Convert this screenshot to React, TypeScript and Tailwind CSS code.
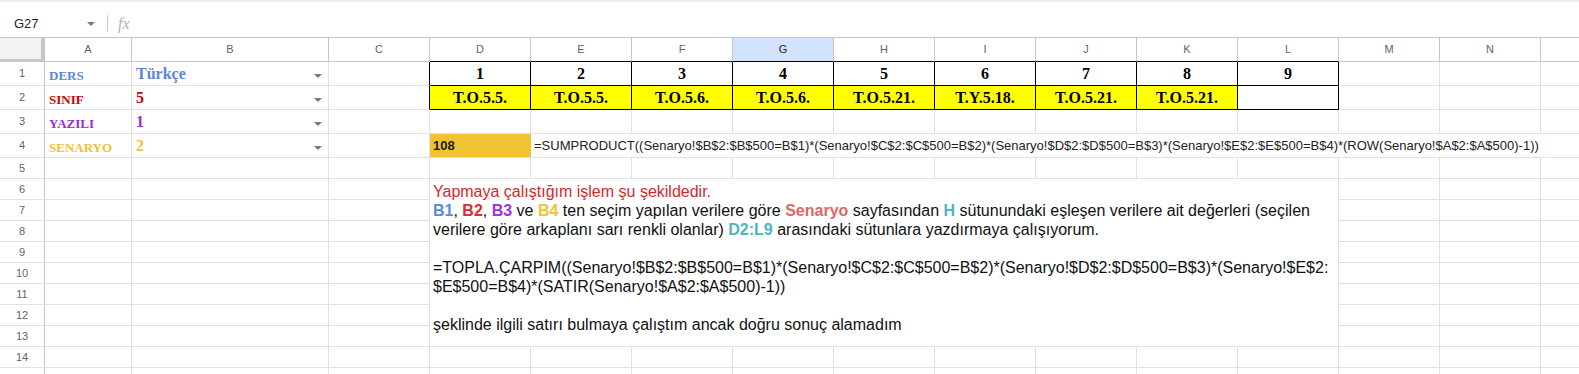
import React from 'react'

const cols = ['A', 'B', 'C', 'D', 'E', 'F', 'G', 'H', 'I', 'J', 'K', 'L', 'M', 'N', 'O']

const choices = [
  { label: 'DERS', value: 'Türkçe', color: 'text-[#5b87d2]' },
  { label: 'SINIF', value: '5', color: 'text-[#cc0000]' },
  { label: 'YAZILI', value: '1', color: 'text-[#9a2bd8]' },
  { label: 'SENARYO', value: '2', color: 'text-[#f1c232]' },
]

const codes = ['T.O.5.5.', 'T.O.5.5.', 'T.O.5.6.', 'T.O.5.6.', 'T.O.5.21.', 'T.Y.5.18.', 'T.O.5.21.', 'T.O.5.21.']

const formula =
  '=SUMPRODUCT((Senaryo!$B$2:$B$500=B$1)*(Senaryo!$C$2:$C$500=B$2)*(Senaryo!$D$2:$D$500=B$3)*(Senaryo!$E$2:$E$500=B$4)*(ROW(Senaryo!$A$2:$A$500)-1))'

function Arrow() {
  return (
    <svg width="8" height="4" viewBox="0 0 8 4" className="shrink-0">
      <path d="M0 0h8L4 4z" fill="#7b7b7b" />
    </svg>
  )
}

function RowHead({ n }: { n?: number }) {
  return (
    <div className="flex items-center justify-center border-r border-b border-r-[#c4c7c5] border-b-[#e1e1e1] text-[11px] text-[#5f6368]">
      {n}
    </div>
  )
}

function Blank({ right }: { right?: boolean }) {
  return <div className={`border-r border-b border-b-[#e1e1e1] ${right ? 'border-r-black' : 'border-r-[#e1e1e1]'}`} />
}

export default function App() {
  const rows: React.ReactNode[] = []

  // header row
  rows.push(
    <div key="corner" className="bg-[#f3f3f3] border-r-4 border-b-[3px] border-[#c4c7c5]" />
  )
  cols.forEach((c) =>
    rows.push(
      <div
        key={'h' + c}
        className={`flex items-center justify-center border-r border-b border-[#c4c7c5] text-[11px] ${
          c === 'G' ? 'bg-[#d3e3fd] text-[#1f1f1f]' : 'text-[#5f6368]'
        } ${'DEFGHIJKL'.includes(c) ? 'border-b-black' : ''}`}
      >
        {/* O's label sits past the right edge of the window */}
        {c === 'O' ? null : c}
      </div>
    )
  )

  // rows 1-4
  choices.forEach((ch, i) => {
    const r = i + 1
    rows.push(<RowHead key={'r' + r} n={r} />)
    rows.push(
      <div key={'a' + r} className="flex items-end pl-[4px] pb-[3px] border-r border-b border-[#e1e1e1]">
        <span className={`font-['Liberation_Serif',serif] font-bold text-[13px] leading-none ${ch.color}`}>{ch.label}</span>
      </div>
    )
    rows.push(
      <div key={'b' + r} className="flex items-end justify-between pl-[4px] pr-[6px] pb-[3px] border-r border-b border-[#e1e1e1]">
        <span className={`font-['Liberation_Serif',serif] font-bold text-[16px] leading-none ${ch.color}`}>{ch.value}</span>
        <div className="mb-[4px]">
          <Arrow />
        </div>
      </div>
    )
    rows.push(<Blank key={'c' + r} right={r <= 2} />)

    if (r === 1) {
      for (let k = 1; k <= 9; k++) {
        rows.push(
          <div
            key={'n' + k}
            className="flex items-center justify-center border-r border-b border-black font-['Liberation_Serif',serif] font-bold text-[16px] text-black"
          >
            {k}
          </div>
        )
      }
      ;['M', 'N', 'O'].forEach((c) => rows.push(<Blank key={'1' + c} />))
    } else if (r === 2) {
      codes.forEach((code, k) =>
        rows.push(
          <div
            key={'t' + k}
            className="flex items-center justify-center bg-[#ffff00] border-r border-b border-black font-['Liberation_Serif',serif] font-bold text-[16px] text-black"
          >
            {code}
          </div>
        )
      )
      rows.push(<div key="l2" className="border-r border-b border-black bg-white" />)
      ;['M', 'N', 'O'].forEach((c) => rows.push(<Blank key={'2' + c} />))
    } else if (r === 3) {
      cols.slice(3).forEach((c) => rows.push(<Blank key={'3' + c} />))
    } else {
      rows.push(
        <div key="d4" className="flex items-center pl-[3px] bg-[#f1c232] border-b border-[#e1e1e1] text-[13px] font-bold text-[#1a1a1a]">
          108
        </div>
      )
      rows.push(
        <div key="e4" className="col-span-11 flex items-center pl-[3px] border-b border-[#e1e1e1] text-[13px] text-[#222] whitespace-nowrap overflow-hidden">
          {formula}
        </div>
      )
    }
  })

  // rows 5-15 (15 is only a sliver at the bottom edge)
  for (let r = 5; r <= 15; r++) {
    rows.push(<RowHead key={'r' + r} n={r < 15 ? r : undefined} />)
    const merged = r >= 6 && r <= 13
    cols.forEach((c, ci) => {
      if (merged && ci >= 3 && ci <= 11) return
      rows.push(<Blank key={r + c} />)
    })
  }

  return (
    <div className="w-[1579px] h-[374px] overflow-hidden bg-white font-['Liberation_Sans',Arial,sans-serif]">
      {/* formula bar */}
      <div className="h-[38px] flex flex-col border-b border-[#c4c7c5]">
        <div className="h-[2px] bg-[#eceff1]" />
        <div className="flex-1 flex items-center pt-[8px]">
          <span className="ml-[14px] w-[73px] text-[13px] text-[#1f1f1f]">G27</span>
          <Arrow />
          <div className="ml-[12px] w-px h-[17px] bg-[#c7c7c7]" />
          <span className="ml-[10px] font-['Liberation_Serif',serif] italic text-[16px] text-[#b0b0b0]">fx</span>
        </div>
      </div>

      {/* sheet */}
      <div className="grid w-max grid-cols-[45px_87px_197px_repeat(12,101px)_101px] grid-rows-[repeat(5,24px)_repeat(11,21px)]">
        {rows}
        <div className="col-start-5 col-span-9 row-start-7 row-span-8 bg-white border-r border-b border-[#e1e1e1] pl-[3px] pt-[3px] text-[16px] leading-[19px] text-[#111] whitespace-nowrap">
          <div className="text-[#d12a2a]">Yapmaya çalıştığım işlem şu şekildedir.</div>
          <div>
            <b className="text-[#5b8bd7]">B1</b>, <b className="text-[#e02b2b]">B2</b>,{' '}
            <b className="text-[#9a33dc]">B3</b> ve <b className="text-[#f1c232]">B4</b> ten seçim yapılan verilere göre{' '}
            <b className="text-[#e06666]">Senaryo</b> sayfasından <b className="text-[#4bb5c1]">H</b> sütunundaki eşleşen
            verilere ait değerleri (seçilen
          </div>
          <div>
            verilere göre arkaplanı sarı renkli olanlar) <b className="text-[#4bb5c1]">D2:L9</b> arasındaki sütunlara
            yazdırmaya çalışıyorum.
          </div>
          <div>&nbsp;</div>
          <div>=TOPLA.ÇARPIM((Senaryo!$B$2:$B$500=B$1)*(Senaryo!$C$2:$C$500=B$2)*(Senaryo!$D$2:$D$500=B$3)*(Senaryo!$E$2:</div>
          <div>$E$500=B$4)*(SATIR(Senaryo!$A$2:$A$500)-1))</div>
          <div>&nbsp;</div>
          <div>şeklinde ilgili satırı bulmaya çalıştım ancak doğru sonuç alamadım</div>
        </div>
      </div>
    </div>
  )
}
